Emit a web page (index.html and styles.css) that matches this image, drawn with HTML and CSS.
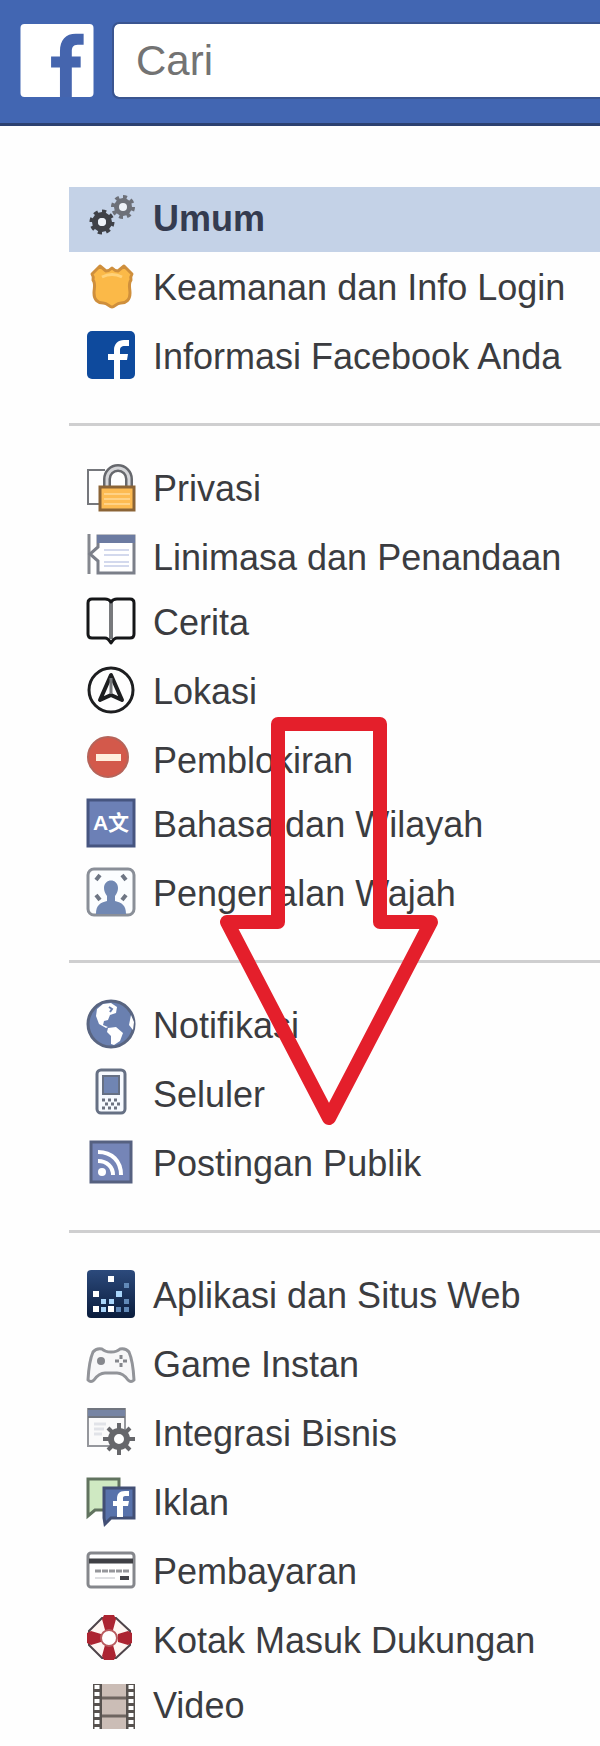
FILE: index.html
```html
<!DOCTYPE html>
<html lang="id">
<head>
<meta charset="utf-8">
<meta name="viewport" content="width=device-width, initial-scale=1">
<title>Pengaturan Akun Umum</title>
<link rel="stylesheet" href="styles.css">
</head>
<body>
<div class="page">
  <header class="topbar">
    <a class="logo" href="#" aria-label="Facebook">
      <svg viewBox="0 0 74 74" aria-hidden="true">
        <rect width="74" height="74" rx="4" fill="#fff"/>
        <path d="M40 74V44h-9V33h9v-5c0-12 6-18 16-18h8v11h-6c-5 0-6 3-6 7v5h9v11h-9v30z" fill="#4565ae"/>
      </svg>
    </a>
    <input class="search" type="search" placeholder="Cari" aria-label="Cari">
  </header>

  <nav class="menu" aria-label="Pengaturan">
    <ul class="group">
      <li><a class="item item-active" href="#" aria-current="page">
        <svg class="icon" viewBox="0 0 48 48" aria-hidden="true" fill="none">
          <circle cx="36" cy="14" r="6" stroke="#6d7078" stroke-width="6"/>
          <circle cx="36" cy="14" r="10" stroke="#6d7078" stroke-width="4" pathLength="16" stroke-dasharray="1 1"/>
          <circle cx="36" cy="14" r="4" fill="#eef2f8"/>
          <circle cx="15" cy="29" r="7" stroke="#3f4147" stroke-width="6"/>
          <circle cx="15" cy="29" r="10" stroke="#3f4147" stroke-width="5" pathLength="16" stroke-dasharray="1 1"/>
          <circle cx="15" cy="29" r="4" fill="#eef2f8"/>
        </svg>
        <span class="label">Umum</span></a></li>
      <li><a class="item" href="#">
        <svg class="icon" viewBox="0 0 48 48" aria-hidden="true">
          <path d="M13 4l6 5q3 0 6-3 3 3 6 3l6-5 8 8q-2 3-1 6c-3 4-1 8-1 13 0 7-4 10-9 10-5 0-6 4-9 4s-4-4-9-4c-5 0-9-3-9-10 0-5 2-9-1-13q1-3-1-6z" fill="#fbb948" stroke="#cf8f3c" stroke-width="3" stroke-linejoin="round"/>
          <path d="M15 15q10-5 20 0" fill="none" stroke="#ffd27a" stroke-width="3"/>
        </svg>
        <span class="label">Keamanan dan Info Login</span></a></li>
      <li><a class="item" href="#">
        <svg class="icon" viewBox="0 0 48 48" aria-hidden="true">
          <rect width="48" height="48" rx="5" fill="#0e4a9d"/>
          <path d="M27 48V29h-6v-6h6v-4c0-6 4-10 10-10h5v6h-4c-4 0-5 2-5 4v4h8l-1 6h-7v19z" fill="#fff"/>
        </svg>
        <span class="label">Informasi Facebook Anda</span></a></li>
    </ul>

    <ul class="group">
      <li><a class="item" href="#">
        <svg class="icon" viewBox="0 0 48 48" aria-hidden="true" fill="none">
          <path d="M18 7H1v34h12" stroke="#75777c" stroke-width="2"/>
          <path d="M20 24V16a11 11 0 0 1 22 0v8" stroke="#66686d" stroke-width="8"/>
          <path d="M20 24V16a11 11 0 0 1 22 0v8" stroke="#d5d6d9" stroke-width="3"/>
          <rect x="13" y="24" width="34" height="23" fill="#fdbb52" stroke="#8b6436" stroke-width="3"/>
          <path d="M17 31h26M17 36h26M17 41h26" stroke="#ffd286" stroke-width="2"/>
        </svg>
        <span class="label">Privasi</span></a></li>
      <li><a class="item" href="#">
        <svg class="icon" viewBox="0 0 48 48" aria-hidden="true" fill="none">
          <path d="M2 2v40" stroke="#85888f" stroke-width="3"/>
          <path d="M11 4h36v37H11V29l-8-7 8-7z" fill="#fff" stroke="#7b7f89" stroke-width="3"/>
          <path d="M10 7h38" stroke="#6c7ba1" stroke-width="8"/>
          <path d="M17 18h25M17 23h25M17 30h25M17 34h25" stroke="#d3d9ed" stroke-width="2"/>
        </svg>
        <span class="label">Linimasa dan Penandaan</span></a></li>
      <li class="close"><a class="item" href="#">
        <svg class="icon" viewBox="0 0 48 48" aria-hidden="true" fill="none">
          <path d="M24 4v38" stroke="#77797c" stroke-width="4"/>
          <path d="M24 5q-2-3-6-3H5Q1 2 1 6v31q0 4 4 4h13q3 0 6 5 3-5 6-5h13q4 0 4-4V6q0-4-4-4H30q-4 0-6 3z" stroke="#151618" stroke-width="3" stroke-linejoin="round"/>
        </svg>
        <span class="label">Cerita</span></a></li>
      <li><a class="item" href="#">
        <svg class="icon" viewBox="0 0 48 48" aria-hidden="true" fill="none">
          <circle cx="24" cy="24" r="22" stroke="#1d1e20" stroke-width="3"/>
          <path d="M24 9L13 34l11-5 11 5z" stroke="#1d1e20" stroke-width="4" stroke-linejoin="round"/>
          <path d="M24 12v16" stroke="#77797c" stroke-width="3"/>
        </svg>
        <span class="label">Lokasi</span></a></li>
      <li><a class="item" href="#">
        <svg class="icon" viewBox="0 0 48 48" aria-hidden="true">
          <circle cx="21" cy="22" r="20" fill="#d3594b" stroke="#b5645a" stroke-width="2"/>
          <rect x="9" y="19" width="25" height="7" fill="#ffeedd"/>
        </svg>
        <span class="label">Pemblokiran</span></a></li>
      <li class="closer"><a class="item" href="#">
        <svg class="icon" viewBox="0 0 48 48" aria-hidden="true">
          <rect x="1" y="1" width="46" height="46" fill="#6c80b6" stroke="#465580" stroke-width="3"/>
          <text class="glyphs" x="24" y="31" text-anchor="middle" fill="#fff">A文</text>
        </svg>
        <span class="label">Bahasa dan Wilayah</span></a></li>
      <li><a class="item" href="#">
        <svg class="icon" viewBox="0 0 48 48" aria-hidden="true" fill="none">
          <rect x="1" y="1" width="46" height="46" rx="6" fill="#fbfdff" stroke="#8a8f98" stroke-width="3"/>
          <path d="M9 46c0-9 4-11 11-13v-5c-2-3-3-5-3-8 0-10 14-10 14 0 0 3-1 5-3 8v5c7 2 11 4 11 13z" fill="#7188b3"/>
          <path d="M9 12l4-5M35 7l4 5M9 27l4 5M39 27l-4 5" stroke="#6e7684" stroke-width="4"/>
        </svg>
        <span class="label">Pengenalan Wajah</span></a></li>
    </ul>

    <ul class="group">
      <li><a class="item" href="#">
        <svg class="icon" viewBox="0 0 48 48" aria-hidden="true">
          <circle cx="24" cy="24" r="23" fill="#6a80b0" stroke="#596581" stroke-width="3"/>
          <path d="M10 9l6-5 8-1 6 4-1 6-6 2-2 5-4 1-1 4 5 2-2 1-7-4-3-8zM21 28l8-1 7 6-3 8-6 4-3-1v-8l-4-4zM44 15l3 7-1 8-4-5z" fill="#fff"/>
          <path d="M22 7l3 2-2 3" fill="none" stroke="#6a80b0" stroke-width="2"/>
        </svg>
        <span class="label">Notifikasi</span></a></li>
      <li><a class="item" href="#">
        <svg class="icon" viewBox="0 0 48 48" aria-hidden="true" fill="none">
          <rect x="10" y="1" width="28" height="43" rx="4" fill="#f7faff" stroke="#667084" stroke-width="3"/>
          <rect x="16" y="7" width="16" height="18" fill="#7085b3" stroke="#667084" stroke-width="2"/>
          <path d="M15 31h18M18 35h15M15 39h18" stroke="#6d7280" stroke-width="3" stroke-dasharray="3 3"/>
        </svg>
        <span class="label">Seluler</span></a></li>
      <li><a class="item" href="#">
        <svg class="icon" viewBox="0 0 48 48" aria-hidden="true" fill="none">
          <rect x="4" y="4" width="40" height="40" fill="#7585b7" stroke="#566180" stroke-width="3"/>
          <circle cx="15" cy="34" r="4" fill="#fff"/>
          <path d="M11 23c9 0 15 6 15 14M11 14c14 0 23 9 23 23" stroke="#fff" stroke-width="4"/>
        </svg>
        <span class="label">Postingan Publik</span></a></li>
    </ul>

    <ul class="group">
      <li><a class="item" href="#">
        <svg class="icon" viewBox="0 0 48 48" aria-hidden="true">
          <defs><linearGradient id="night" x2="0" y2="1"><stop stop-color="#2c4a7c"/><stop offset="1" stop-color="#0a1c3c"/></linearGradient></defs>
          <rect width="48" height="48" rx="4" fill="url(#night)"/>
          <path d="M21 6h6v6h-6zM6 21h6v6H6zM6 36h6v6H6zM21 36h6v6h-6z" fill="#fff"/>
          <path d="M29 21h6v6h-6zM14 29h5v5h-5zM22 29h5v5h-5zM14 37h5v5h-5z" fill="#a9d5fa"/>
          <path d="M37 13h5v5h-5zM29 37h5v5h-5zM37 37h5v5h-5zM37 29h5v5h-5z" fill="#6189b8"/>
        </svg>
        <span class="label">Aplikasi dan Situs Web</span></a></li>
      <li><a class="item" href="#">
        <svg class="icon" viewBox="0 0 48 48" aria-hidden="true" fill="none">
          <path d="M6 13q3-4 9-3 3 3 9 3t9-3q6-1 9 3 4 9 5 28-3 3-6 0-5-7-11-7H18q-6 0-11 7-3 3-6 0 1-19 5-28z" fill="#f7f7f8" stroke="#929499" stroke-width="3" stroke-linejoin="round"/>
          <circle cx="14" cy="22" r="4" fill="#85878c"/>
          <path d="M34 16v4M34 24v4M28 22h4M36 22h4" stroke="#85878c" stroke-width="3"/>
        </svg>
        <span class="label">Game Instan</span></a></li>
      <li><a class="item" href="#">
        <svg class="icon" viewBox="0 0 48 48" aria-hidden="true" fill="none">
          <rect x="1" y="1" width="37" height="37" fill="#fafafa" stroke="#95979c" stroke-width="2"/>
          <path d="M1 5h37" stroke="#7684a3" stroke-width="8"/>
          <path d="M1 1h37M1 9h37" stroke="#70757f" stroke-width="2"/>
          <path d="M7 16h12M7 21h10M7 26h8" stroke="#e1e3e8" stroke-width="3"/>
          <path d="M32 15v32M16 31h32M21 20l22 22M43 20L21 42" stroke="#66676b" stroke-width="4"/>
          <circle cx="32" cy="31" r="8" fill="#fff" stroke="#66676b" stroke-width="6"/>
        </svg>
        <span class="label">Integrasi Bisnis</span></a></li>
      <li><a class="item" href="#">
        <svg class="icon" viewBox="0 0 48 48" aria-hidden="true" fill="none">
          <path d="M1 2h31v31H8l-7 6z" fill="#cfe9c2" stroke="#61735f" stroke-width="3"/>
          <path d="M17 11h30v30H24l-6 6-1-6z" fill="#5872ab" stroke="#424f75" stroke-width="3"/>
          <path d="M30 40V29h-4v-5h4v-2c0-5 2-8 8-8h4v5h-3c-3 0-3 1-3 3v2h6l-1 5h-5v11z" fill="#fff"/>
        </svg>
        <span class="label">Iklan</span></a></li>
      <li><a class="item" href="#">
        <svg class="icon" viewBox="0 0 48 48" aria-hidden="true" fill="none">
          <rect x="1" y="7" width="46" height="34" rx="3" fill="#fff" stroke="#85878c" stroke-width="3"/>
          <path d="M2 15h44" stroke="#3f4045" stroke-width="5"/>
          <path d="M8 25h34" stroke="#96979b" stroke-width="3" stroke-dasharray="6 1"/>
          <path d="M8 32h20" stroke="#dedfe2" stroke-width="2"/>
          <path d="M33 32h9" stroke="#44454a" stroke-width="4"/>
        </svg>
        <span class="label">Pembayaran</span></a></li>
      <li><a class="item" href="#">
        <svg class="icon" viewBox="0 0 48 48" aria-hidden="true" fill="none">
          <path d="M15 3h14l14 13v14L29 43H15L2 30V16z" fill="#fff6f2" stroke="#4f454b" stroke-width="2"/>
          <path d="M17 0h10l2 4-3 11h-8L15 4zM17 45h10l2-4-3-11h-8l-3 11zM0 18l4-2 10 3v8L4 30l-4-2zM45 18l-4-2-10 3v8l10 3 4-2z" fill="#ac2431"/>
          <circle cx="22" cy="23" r="8" fill="#fff" stroke="#b95a5e" stroke-width="2"/>
        </svg>
        <span class="label">Kotak Masuk Dukungan</span></a></li>
      <li class="close"><a class="item" href="#">
        <svg class="icon" viewBox="0 0 48 48" aria-hidden="true" fill="none">
          <path d="M6 4h42v45H6z" fill="#57524f"/>
          <path d="M15 4h24v45H15z" fill="#cbbdb6"/>
          <path d="M10 5v44M44 5v44" stroke="#fff" stroke-width="5" stroke-dasharray="4 3"/>
          <path d="M15 18h24M15 36h24" stroke="#6e6560" stroke-width="3"/>
        </svg>
        <span class="label">Video</span></a></li>
    </ul>
  </nav>

  <svg class="arrow" viewBox="0 0 220 412" aria-hidden="true">
    <path d="M59 8H161V206H212L110 402 8 206H59Z" fill="none" stroke="#e41f2b" stroke-width="14" stroke-linejoin="round"/>
  </svg>
</div>
</body>
</html>
```
FILE: styles.css
```css
* {
  box-sizing: border-box;
}

body {
  margin: 0;
  background: #fefefe;
  color: #3b3c40;
  font-family: "Liberation Sans", Arial, sans-serif;
  font-size: 36px;
}

.page {
  position: relative;
  overflow: hidden;
}

.topbar {
  display: flex;
  gap: 20px;
  padding: 24px 0 26px 20px;
  background: #4266b2;
  border-bottom: 3px solid #2c4170;
}

.logo {
  display: block;
  flex: none;
}

.logo svg {
  display: block;
  width: 74px;
  height: 73px;
}

.search {
  flex: 1;
  min-width: 0;
  height: 73px;
  padding: 0 0 0 22px;
  border: 0;
  border-radius: 5px 0 0 5px;
  outline: 2px solid #3a5590;
  background: #fff;
  color: #3b3c40;
  font: inherit;
  font-size: 42px;
  appearance: none;
}

.search::placeholder {
  color: #737373;
  opacity: 1;
}

.menu {
  padding: 61px 0 7px 69px;
}

.group {
  display: flex;
  flex-direction: column;
  gap: 4px;
  margin: 0;
  padding: 0;
  list-style: none;
}

.group + .group {
  margin-top: 33px;
  padding-top: 31px;
  border-top: 3px solid #cfcfd0;
}

.close {
  margin-top: -4px;
}

.closer {
  margin-top: -5px;
}

.item {
  display: flex;
  align-items: flex-start;
  gap: 18px;
  height: 65px;
  padding-left: 18px;
  color: inherit;
  text-decoration: none;
}

.item-active {
  background: #c4d2e7;
  color: #343b50;
  font-weight: bold;
}

.icon {
  flex: none;
  width: 48px;
  height: 48px;
  margin-top: 6px;
  overflow: visible;
}

.label {
  line-height: 63px;
  white-space: nowrap;
}

.glyphs {
  font: bold 21px "Liberation Sans", "Noto Sans CJK SC", sans-serif;
}

.arrow {
  position: absolute;
  top: 716px;
  left: 219px;
  width: 220px;
  height: 412px;
  pointer-events: none;
}
```
